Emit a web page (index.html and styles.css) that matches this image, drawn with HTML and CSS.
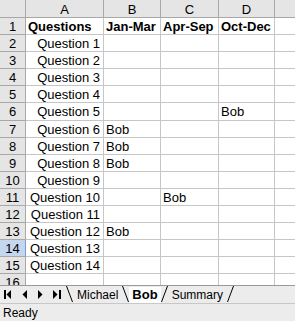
FILE: index.html
```html
<!DOCTYPE html>
<html lang="en">
<head>
  <meta charset="UTF-8">
  <title>Book1 - Bob</title>
  <link rel="stylesheet" href="styles.css">
</head>
<body>
  <div class="sheet">
    <div class="grid">
      <div class="hd corner"></div><div class="hd">A</div><div class="hd">B</div><div class="hd">C</div><div class="hd">D</div><div class="hd"></div>

      <div class="rh">1</div><div class="c b">Questions</div><div class="c b">Jan-Mar</div><div class="c b">Apr-Sep</div><div class="c b">Oct-Dec</div><div class="c"></div>
      <div class="rh">2</div><div class="c r">Question 1</div><div class="c"></div><div class="c"></div><div class="c"></div><div class="c"></div>
      <div class="rh">3</div><div class="c r">Question 2</div><div class="c"></div><div class="c"></div><div class="c"></div><div class="c"></div>
      <div class="rh">4</div><div class="c r">Question 3</div><div class="c"></div><div class="c"></div><div class="c"></div><div class="c"></div>
      <div class="rh">5</div><div class="c r">Question 4</div><div class="c"></div><div class="c"></div><div class="c"></div><div class="c"></div>
      <div class="rh">6</div><div class="c r">Question 5</div><div class="c"></div><div class="c"></div><div class="c">Bob</div><div class="c"></div>
      <div class="rh">7</div><div class="c r">Question 6</div><div class="c">Bob</div><div class="c"></div><div class="c"></div><div class="c"></div>
      <div class="rh">8</div><div class="c r">Question 7</div><div class="c">Bob</div><div class="c"></div><div class="c"></div><div class="c"></div>
      <div class="rh">9</div><div class="c r">Question 8</div><div class="c">Bob</div><div class="c"></div><div class="c"></div><div class="c"></div>
      <div class="rh">10</div><div class="c r">Question 9</div><div class="c"></div><div class="c"></div><div class="c"></div><div class="c"></div>
      <div class="rh">11</div><div class="c r">Question 10</div><div class="c"></div><div class="c">Bob</div><div class="c"></div><div class="c"></div>
      <div class="rh">12</div><div class="c r">Question 11</div><div class="c"></div><div class="c"></div><div class="c"></div><div class="c"></div>
      <div class="rh">13</div><div class="c r">Question 12</div><div class="c">Bob</div><div class="c"></div><div class="c"></div><div class="c"></div>
      <div class="rh sel">14</div><div class="c r">Question 13</div><div class="c"></div><div class="c"></div><div class="c"></div><div class="c"></div>
      <div class="rh">15</div><div class="c r">Question 14</div><div class="c"></div><div class="c"></div><div class="c"></div><div class="c"></div>
      <div class="rh">16</div><div class="c"></div><div class="c"></div><div class="c"></div><div class="c"></div><div class="c"></div>
    </div>
  </div>

  <div class="tabbar">
    <div class="nav">
      <svg width="8" height="9" viewBox="0 0 8 9"><rect x="0" y="0" width="2" height="9" fill="#000"/><path d="M7 0 L2.5 4.5 L7 9 Z" fill="#000"/></svg>
      <svg width="5" height="9" viewBox="0 0 5 9"><path d="M5 0 L0.5 4.5 L5 9 Z" fill="#000"/></svg>
      <svg width="5" height="9" viewBox="0 0 5 9"><path d="M0 0 L4.5 4.5 L0 9 Z" fill="#000"/></svg>
      <svg width="8" height="9" viewBox="0 0 8 9"><path d="M0 0 L4.5 4.5 L0 9 Z" fill="#000"/><rect x="6" y="0" width="2" height="9" fill="#000"/></svg>
    </div>
    <svg class="edge" width="7" height="16" viewBox="0 0 7 16"><path d="M0.5 0 L6.5 16" stroke="#000" fill="none"/></svg>
    <span class="tab">Michael</span>
    <svg class="edge" width="7" height="16" viewBox="0 0 7 16"><path d="M0.5 0 L6.5 16" stroke="#000" fill="none"/></svg>
    <span class="tab active">Bob</span>
    <svg class="edge" width="7" height="16" viewBox="0 0 7 16"><path d="M6.5 0 L0.5 16" stroke="#000" fill="none"/></svg>
    <span class="tab">Summary</span>
    <svg class="edge" width="7" height="16" viewBox="0 0 7 16"><path d="M6.5 0 L0.5 16" stroke="#000" fill="none"/></svg>
  </div>

  <div class="status">Ready</div>
</body>
</html>
```

FILE: styles.css
```css
/* Hoja de cálculo estilo Excel 2003 */
body {
  margin: 0;
  width: 295px;
  height: 321px;
  overflow: hidden;
  font-family: "Liberation Sans", Arial, sans-serif;
  background-color: #ececec;
  color: #000;
}

.sheet {
  height: 285px;
  overflow: hidden;
  background-color: #fff;
}

.grid {
  display: grid;
  grid-template-columns: 26px 78px 57px 58px 56px 26px;
  grid-template-rows: 18px;
  grid-auto-rows: 17.1px;
}

.grid > div {
  box-sizing: border-box;
  border-right: 1px solid #c6c6c6;
  border-bottom: 1px solid #c6c6c6;
  font-size: 13px;
  line-height: 15px;
  white-space: nowrap;
  overflow: hidden;
}

.hd {
  background-color: #e5e5e5;
  border-color: #a8a8a8 !important;
  text-align: center;
  padding-top: 2px;
}

.rh {
  background-color: #e5e5e5;
  border-color: #a8a8a8 !important;
  text-align: center;
  padding-top: 1px;
}

.rh.sel {
  background-color: #c4d7ee;
  border-right-color: #7c9cc4 !important;
}

.c {
  padding: 1px 3px 0 2px;
}

.c.r {
  text-align: right;
}

.c.b {
  font-weight: bold;
}

.tabbar {
  height: 17px;
  display: flex;
  align-items: center;
  border-top: 1px solid #9a9a9a;
  border-bottom: 1px solid #c8c8c8;
  background-color: #ececec;
  font-size: 12px;
}

.nav {
  width: 66px;
  display: flex;
  align-items: center;
  padding-left: 4px;
  box-sizing: border-box;
}

.nav svg {
  margin-right: 10px;
}

.nav svg:nth-child(2) {
  margin-right: 11px;
}

.nav svg:last-child {
  margin-right: 0;
}

.edge {
  display: block;
  height: 16px;
  align-self: flex-start;
}

.tab {
  padding: 0 4px;
  line-height: 16px;
}

.tab.active {
  font-weight: bold;
  background-color: #fff;
  font-size: 13px;
  padding: 0 3px;
}

.status {
  height: 18px;
  line-height: 18px;
  padding-left: 3px;
  font-size: 12px;
  background-color: #ececec;
}
```
